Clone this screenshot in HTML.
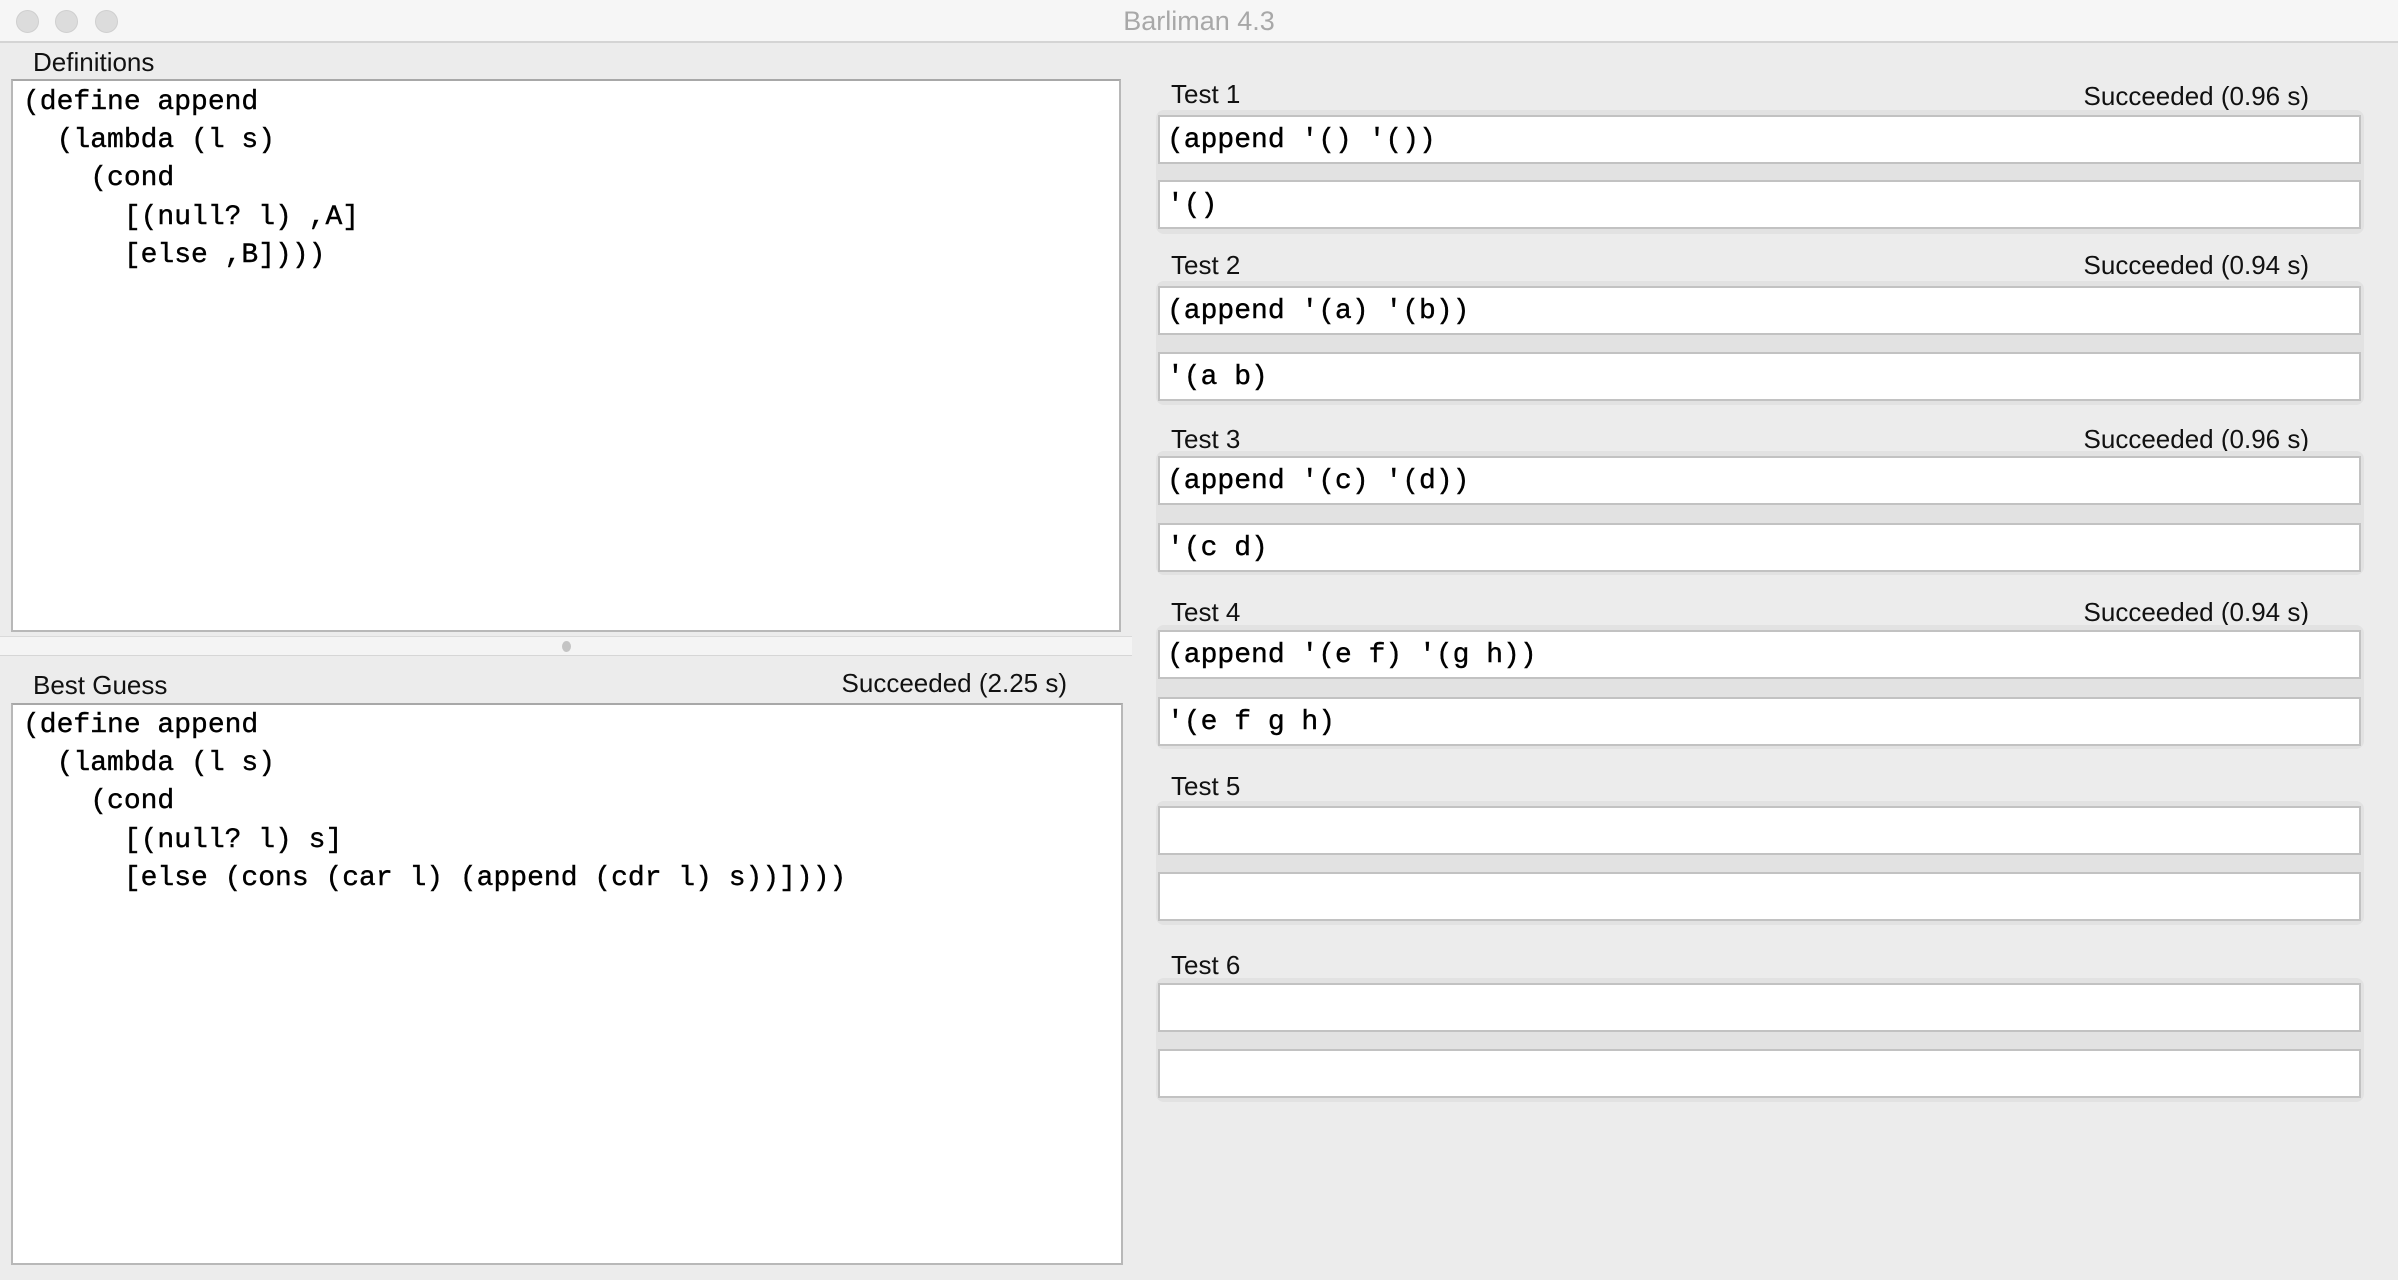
<!DOCTYPE html>
<html><head><meta charset="utf-8"><style>
*{margin:0;padding:0;box-sizing:border-box}
body{width:2398px;height:1280px;background:#ececec;position:relative;overflow:hidden;font-family:"Liberation Sans",sans-serif}
.a{position:absolute}
.lbl{position:absolute;font-size:26px;color:#111;line-height:30px}
.box{position:absolute;background:#fff;border:2px solid #b8b8b8;border-top-color:#a8a8a8}
.code{position:absolute;font-family:"Liberation Mono","DejaVu Sans Mono",monospace;font-size:28px;line-height:38.2px;color:#000;white-space:pre;-webkit-text-stroke:0.4px #000}
.fld{position:absolute;left:1158px;width:1203px;height:49px;background:#fff;border:2px solid #c2c2c2;font-family:"Liberation Mono",monospace;font-size:28px;line-height:47px;padding-left:7px;white-space:pre;color:#000;-webkit-text-stroke:0.4px #000}
.grp{position:absolute;left:1156px;width:1208px;background:#e2e2e2;border-radius:8px}
.dot{position:absolute;top:10px;width:23px;height:23px;border-radius:50%;background:#dcdcdc;border:1px solid #cfcfcf}
</style></head><body>
<div class="a" style="left:0;top:0;width:2398px;height:43px;background:#f6f6f6;border-bottom:2px solid #d4d4d4"></div>
<div class="dot" style="left:16px"></div><div class="dot" style="left:55px"></div><div class="dot" style="left:95px"></div>
<div class="a" style="left:0;top:6px;width:2398px;text-align:center;font-size:27px;color:#a8a8a8">Barliman 4.3</div>

<div class="lbl" style="left:33px;top:47px">Definitions</div>
<div class="box" style="left:11px;top:79px;width:1110px;height:553px"></div>
<div class="code" style="left:23px;top:84px">(define append
  (lambda (l s)
    (cond
      [(null? l) ,A]
      [else ,B])))</div>

<div class="a" style="left:0;top:636px;width:1132px;height:20px;background:#f4f4f4;border-top:1px solid #dadada;border-bottom:1px solid #d6d6d6"></div>
<div class="a" style="left:562px;top:641px;width:9px;height:11px;border-radius:50%;background:#c4c4c4"></div>

<div class="lbl" style="left:33px;top:670px">Best Guess</div>
<div class="lbl" style="left:700px;top:668px;width:367px;text-align:right">Succeeded (2.25 s)</div>
<div class="box" style="left:11px;top:703px;width:1112px;height:562px"></div>
<div class="code" style="left:23px;top:707px">(define append
  (lambda (l s)
    (cond
      [(null? l) s]
      [else (cons (car l) (append (cdr l) s))])))</div>

<div class="lbl" style="left:1171px;top:79px">Test 1</div><div class="lbl" style="left:1800px;top:81px;width:509px;text-align:right">Succeeded (0.96 s)</div>
<div class="grp" style="top:110px;height:124px"></div>
<div class="fld" style="top:115px">(append '() '())</div>
<div class="fld" style="top:180px">'()</div>

<div class="lbl" style="left:1171px;top:250px">Test 2</div><div class="lbl" style="left:1800px;top:250px;width:509px;text-align:right">Succeeded (0.94 s)</div>
<div class="grp" style="top:281px;height:124px"></div>
<div class="fld" style="top:286px">(append '(a) '(b))</div>
<div class="fld" style="top:352px">'(a b)</div>

<div class="lbl" style="left:1171px;top:424px">Test 3</div><div class="lbl" style="left:1800px;top:424px;width:509px;text-align:right">Succeeded (0.96 s)</div>
<div class="grp" style="top:451px;height:124px"></div>
<div class="fld" style="top:456px">(append '(c) '(d))</div>
<div class="fld" style="top:523px">'(c d)</div>

<div class="lbl" style="left:1171px;top:597px">Test 4</div><div class="lbl" style="left:1800px;top:597px;width:509px;text-align:right">Succeeded (0.94 s)</div>
<div class="grp" style="top:625px;height:124px"></div>
<div class="fld" style="top:630px">(append '(e f) '(g h))</div>
<div class="fld" style="top:697px">'(e f g h)</div>

<div class="lbl" style="left:1171px;top:771px">Test 5</div>
<div class="grp" style="top:801px;height:124px"></div>
<div class="fld" style="top:806px"></div>
<div class="fld" style="top:872px"></div>

<div class="lbl" style="left:1171px;top:950px">Test 6</div>
<div class="grp" style="top:978px;height:124px"></div>
<div class="fld" style="top:983px"></div>
<div class="fld" style="top:1049px"></div>
</body></html>
